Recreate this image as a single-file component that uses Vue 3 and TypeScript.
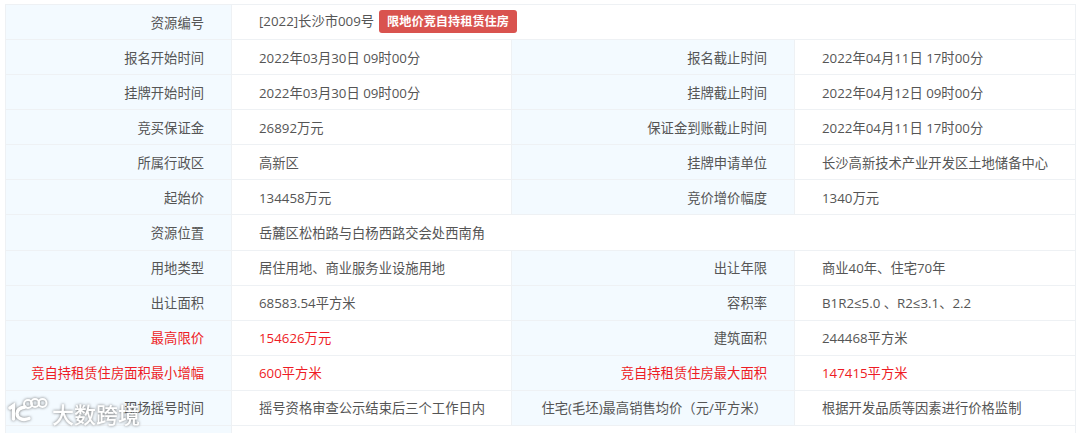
<script setup lang="ts">
interface Cell { text: string; red?: boolean; tag?: string; span?: boolean }
interface Row { a: string; b: Cell; c?: string; d?: Cell; red?: boolean }
const rows: Row[] = [
  { a: '资源编号', b: { text: '[2022]长沙市009号', tag: '限地价竞自持租赁住房', span: true } },
  { a: '报名开始时间', b: { text: '2022年03月30日 09时00分' }, c: '报名截止时间', d: { text: '2022年04月11日 17时00分' } },
  { a: '挂牌开始时间', b: { text: '2022年03月30日 09时00分' }, c: '挂牌截止时间', d: { text: '2022年04月12日 09时00分' } },
  { a: '竞买保证金', b: { text: '26892万元' }, c: '保证金到账截止时间', d: { text: '2022年04月11日 17时00分' } },
  { a: '所属行政区', b: { text: '高新区' }, c: '挂牌申请单位', d: { text: '长沙高新技术产业开发区土地储备中心' } },
  { a: '起始价', b: { text: '134458万元' }, c: '竞价增价幅度', d: { text: '1340万元' } },
  { a: '资源位置', b: { text: '岳麓区松柏路与白杨西路交会处西南角', span: true } },
  { a: '用地类型', b: { text: '居住用地、商业服务业设施用地' }, c: '出让年限', d: { text: '商业40年、住宅70年' } },
  { a: '出让面积', b: { text: '68583.54平方米' }, c: '容积率', d: { text: 'B1R2≤5.0 、R2≤3.1、2.2' } },
  { a: '最高限价', red: true, b: { text: '154626万元', red: true }, c: '建筑面积', d: { text: '244468平方米' } },
  { a: '竞自持租赁住房面积最小增幅', red: true, b: { text: '600平方米', red: true }, c: '竞自持租赁住房最大面积', d: { text: '147415平方米', red: true } },
  { a: '现场摇号时间', b: { text: '摇号资格审查公示结束后三个工作日内' }, c: '住宅(毛坯)最高销售均价（元/平方米）', d: { text: '根据开发品质等因素进行价格监制' } },
]
</script>

<template>
  <div class="page">
    <table class="info">
      <colgroup>
        <col class="c1" /><col class="c2" /><col class="c3" /><col class="c4" />
      </colgroup>
      <tbody>
        <tr v-for="row in rows" :key="row.a">
          <th :class="{ red: row.red }">{{ row.a }}</th>
          <td :colspan="row.b.span ? 3 : 1" :class="{ red: row.b.red }">
            {{ row.b.text }}<span v-if="row.b.tag" class="tag">{{ row.b.tag }}</span>
          </td>
          <template v-if="!row.b.span">
            <th :class="{ red: row.d?.red }">{{ row.c }}</th>
            <td :class="{ red: row.d?.red }">{{ row.d?.text }}</td>
          </template>
        </tr>
        <tr class="tail"><th></th><td colspan="3"></td></tr>
      </tbody>
    </table>
    <div class="mark">
      <svg width="42" height="30" viewBox="0 0 42 30" fill="none" stroke="#fff" stroke-linecap="round">
        <path d="M2 10 L5.500 7.500 V21" stroke-width="3.400" />
        <path d="M17 9 C11 10 9 13 9 15.500 C9 20 14 23 21 20.500" stroke-width="3.400" />
        <circle cx="20" cy="6" r="4" stroke-width="2" />
        <circle cx="27" cy="5" r="4" stroke-width="2" />
        <circle cx="34.500" cy="5" r="4" stroke-width="2" />
      </svg>
      <span class="mark-text">大数跨境</span>
    </div>
  </div>
</template>

<style>
html, body { margin: 0; background: #fff; }
</style>

<style scoped>
.page {
  position: relative;
  width: 1080px;
  height: 433px;
  overflow: hidden;
  background: #fff;
  font-family: "Open Sans", "Noto Sans CJK SC", sans-serif;
  font-size: 13.3px;
  color: #555;
  padding: 4px 0 0 5px;
  box-sizing: border-box;
}
.info {
  border-collapse: collapse;
  table-layout: fixed;
  width: 1070px;
}
.c1 { width: 226px; }
.c2 { width: 280px; }
.c3 { width: 283px; }
.c4 { width: 281px; }
th, td {
  height: 35.08px;
  padding: 1px 0 0;
  box-sizing: border-box;
  border: 1px solid #eef1f4;
  font-weight: 400;
  line-height: 20px;
  white-space: nowrap;
}
th {
  background: #f3faff;
  text-align: right;
  padding-right: 27px;
}
td {
  text-align: left;
  padding-left: 27px;
}
.red { color: #ee1c25; }
.tag {
  display: inline-block;
  margin-left: 5px;
  padding: 0 8px;
  height: 23px;
  line-height: 23px;
  border-radius: 3px;
  background: #d9534f;
  color: #fff;
  font-size: 12.2px;
  font-weight: 700;
  vertical-align: middle;
  transform: translateY(-1px);
}
.tail th, .tail td { height: 20px; }
.mark {
  position: absolute;
  left: 8px;
  top: 398px;
  display: flex;
  align-items: center;
  gap: 2px;
  filter: drop-shadow(0 0 1.5px rgba(90, 90, 90, 0.85));
}
.mark-text {
  color: #fff;
  font-size: 22px;
  line-height: 30px;
  font-weight: 500;
  font-family: "Noto Sans CJK SC", sans-serif;
}
</style>
